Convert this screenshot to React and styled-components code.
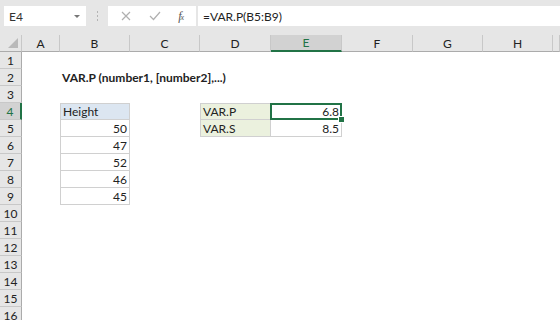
import React from 'react';
import styled, { createGlobalStyle } from 'styled-components';

const GlobalStyle = createGlobalStyle`
  html, body {
    margin: 0;
    padding: 0;
    background: #ffffff;
    overflow: hidden;
  }
  body {
    font-family: Lato, "Open Sans", "Liberation Sans", sans-serif;
  }
`;

const Window = styled.div`
  width: 560px;
  height: 320px;
  overflow: hidden;
  background: #ffffff;
`;

const Toolbar = styled.div`
  display: flex;
  align-items: center;
  height: 35px;
  padding: 6px 0 9px 4px;
  box-sizing: border-box;
  background: #e6e6e6;
`;

const NameBox = styled.div`
  display: flex;
  align-items: center;
  justify-content: space-between;
  width: 82px;
  height: 20px;
  box-sizing: border-box;
  padding: 0 6px 0 5px;
  background: #ffffff;
  font-size: 12px;
  color: #333;
`;

const Caret = styled.span`
  width: 0;
  height: 0;
  border-left: 3px solid transparent;
  border-right: 3px solid transparent;
  border-top: 3px solid #777;
`;

const Grip = styled.div`
  display: flex;
  flex-direction: column;
  gap: 2px;
  margin: 0 10px 0 11px;

  span {
    width: 1px;
    height: 2px;
    background: #b4b4b4;
  }
`;

const ButtonBox = styled.div`
  display: flex;
  align-items: center;
  justify-content: space-around;
  width: 88px;
  height: 20px;
  padding: 0 4px;
  box-sizing: border-box;
  background: #ffffff;
  margin-right: 2px;
`;

const Fx = styled.span`
  font-family: "Liberation Serif", serif;
  font-style: italic;
  font-size: 12px;
  color: #555;
  letter-spacing: -1px;

  sub {
    font-size: 8px;
    vertical-align: baseline;
  }
`;

const FormulaInput = styled.div`
  flex: 1;
  display: flex;
  align-items: center;
  height: 20px;
  padding-left: 5px;
  background: #ffffff;
  font-size: 12px;
  color: #222;
`;

const Grid = styled.div`
  display: grid;
  grid-template-columns: 22px 38px 70px 70px 71px 71px 71px 70px 70px 1fr;
  grid-auto-rows: 17px;
  font-size: 12px;
`;

const ColHead = styled.div`
  display: flex;
  align-items: center;
  justify-content: center;
  background: ${(p) => (p.$active ? '#d2d2d2' : '#e6e6e6')};
  color: ${(p) => (p.$active ? '#217346' : '#222')};
  border-right: 1px solid #c8c8c8;
  border-bottom: ${(p) => (p.$active ? '2px solid #217346' : '1px solid #ababab')};
  box-sizing: border-box;
  font-size: 12px;
`;

const Corner = styled.div`
  position: relative;
  background: #e6e6e6;
  border-right: 1px solid #c8c8c8;
  border-bottom: 1px solid #ababab;
  box-sizing: border-box;

  &::after {
    content: '';
    position: absolute;
    right: 3px;
    bottom: 3px;
    border-left: 10px solid transparent;
    border-bottom: 10px solid #b9b9b9;
  }
`;

const RowHead = styled.div`
  display: flex;
  align-items: center;
  justify-content: center;
  background: ${(p) => (p.$active ? '#d2d2d2' : '#e6e6e6')};
  color: ${(p) => (p.$active ? '#217346' : '#222')};
  border-right: ${(p) => (p.$active ? '2px solid #217346' : '1px solid #ababab')};
  border-bottom: 1px solid #c8c8c8;
  box-sizing: border-box;
  font-size: 12px;
`;

const Cell = styled.div`
  position: relative;
  display: flex;
  align-items: center;
  justify-content: ${(p) => (p.$right ? 'flex-end' : 'flex-start')};
  padding: 0 2px 0 2px;
  box-sizing: border-box;
  white-space: nowrap;
  overflow: visible;
  background: ${(p) => p.$bg || 'transparent'};
  font-weight: ${(p) => (p.$bold ? 700 : 400)};
  color: #222;
  border-top: ${(p) => (p.$bt ? '1px solid #d0d0d0' : '0')};
  border-left: ${(p) => (p.$bl ? '1px solid #d0d0d0' : '0')};
  border-right: ${(p) => (p.$br ? '1px solid #d0d0d0' : '0')};
  border-bottom: ${(p) => (p.$bb ? '1px solid #d0d0d0' : '0')};
  z-index: ${(p) => (p.$selected ? 2 : 0)};
`;

const Selection = styled.div`
  position: absolute;
  left: -1px;
  top: -1px;
  right: -1px;
  bottom: -1px;
  border: 2px solid #217346;
  pointer-events: none;

  &::after {
    content: '';
    position: absolute;
    right: -5px;
    bottom: -5px;
    width: 5px;
    height: 5px;
    background: #217346;
    border: 1px solid #ffffff;
  }
`;

const columns = ['A', 'B', 'C', 'D', 'E', 'F', 'G', 'H'];

const cells = {
  B2: { text: 'VAR.P (number1, [number2],...)', bold: true },
  B4: { text: 'Height', bg: '#dce6f1', bt: true, bl: true, br: true, bb: true },
  B5: { text: '50', right: true, bl: true, br: true, bb: true },
  B6: { text: '47', right: true, bl: true, br: true, bb: true },
  B7: { text: '52', right: true, bl: true, br: true, bb: true },
  B8: { text: '46', right: true, bl: true, br: true, bb: true },
  B9: { text: '45', right: true, bl: true, br: true, bb: true },
  D4: { text: 'VAR.P', bg: '#ebf1de', bt: true, bl: true, br: true, bb: true },
  D5: { text: 'VAR.S', bg: '#ebf1de', bl: true, br: true, bb: true },
  E4: { text: '6.8', right: true, bt: true, br: true, bb: true, selected: true },
  E5: { text: '8.5', right: true, br: true, bb: true },
};

const Sheet = () => {
  const rows = [];
  for (let r = 1; r <= 16; r++) {
    rows.push(
      <RowHead key={`h${r}`} $active={r === 4}>
        {r}
      </RowHead>
    );
    columns.forEach((c) => {
      const d = cells[`${c}${r}`] || {};
      rows.push(
        <Cell
          key={`${c}${r}`}
          $bg={d.bg}
          $bold={d.bold}
          $right={d.right}
          $bt={d.bt}
          $bl={d.bl}
          $br={d.br}
          $bb={d.bb}
          $selected={d.selected}
        >
          {d.text}
          {d.selected && <Selection />}
        </Cell>
      );
    });
    rows.push(<Cell key={`x${r}`} />);
  }
  return rows;
};

const App = () => {
  return (
    <Window>
      <GlobalStyle />
      <Toolbar>
        <NameBox>
          E4
          <Caret />
        </NameBox>
        <Grip>
          <span />
          <span />
          <span />
        </Grip>
        <ButtonBox>
          <svg width="10" height="10" viewBox="0 0 10 10">
            <path d="M1 1 L9 9 M9 1 L1 9" stroke="#b0b0b0" strokeWidth="1.2" fill="none" />
          </svg>
          <svg width="12" height="10" viewBox="0 0 12 10">
            <path d="M1 5 L4.5 8.5 L11 1" stroke="#b0b0b0" strokeWidth="1.2" fill="none" />
          </svg>
          <Fx>
            f<sub>x</sub>
          </Fx>
        </ButtonBox>
        <FormulaInput>=VAR.P(B5:B9)</FormulaInput>
      </Toolbar>
      <Grid>
        <Corner />
        {columns.map((c) => (
          <ColHead key={c} $active={c === 'E'}>
            {c}
          </ColHead>
        ))}
        <ColHead />
        <Sheet />
      </Grid>
    </Window>
  );
};

export default App;
